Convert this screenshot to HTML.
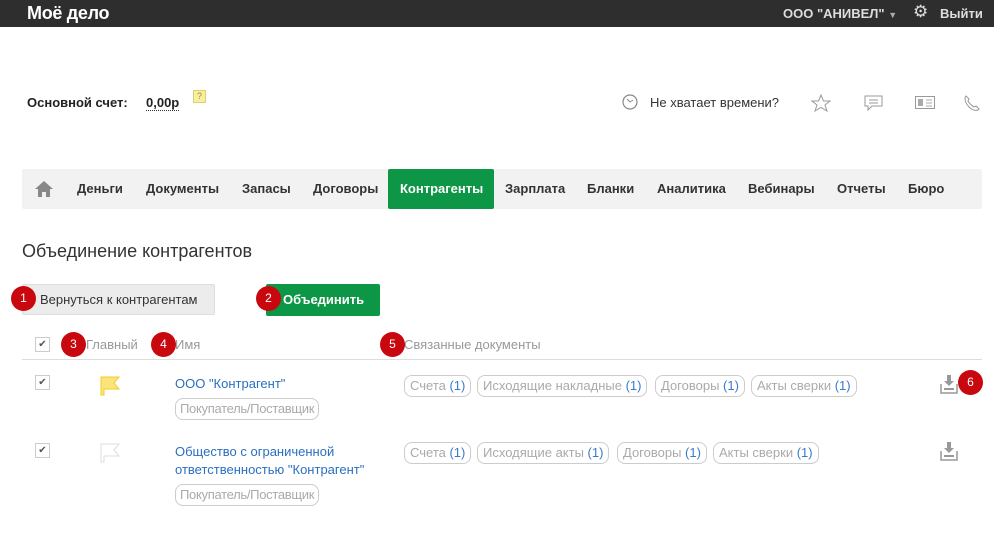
<!DOCTYPE html>
<html><head><meta charset="utf-8"><style>
*{margin:0;padding:0;box-sizing:border-box}
body{width:994px;height:539px;background:#fff;font-family:"Liberation Sans",Arial,sans-serif;position:relative;overflow:hidden;color:#333}
.a{position:absolute;white-space:nowrap}
.top{position:absolute;left:0;top:0;width:994px;height:27px;background:#2e2e2e}
.nav{position:absolute;left:22px;top:169px;width:960px;height:40px;background:#f2f2f2;border-radius:2px}
.nav span{position:absolute;top:12px;font-size:13px;font-weight:bold;color:#333}
.badge{position:absolute;width:25px;height:25px;border-radius:13px;background:#c8080e;color:#fff;font-size:12px;text-align:center;line-height:25px}
.cb{position:absolute;width:15px;height:15px;border:1px solid #ccc;background:#fff;font-size:10px;line-height:13px;text-align:center;color:#555}
.tag{position:absolute;height:22px;border:1px solid #ccc;border-radius:8px;font-size:13px;color:#aaa;line-height:20px;padding:0 5px}
.tag b{font-weight:normal;color:#3a7bc8}
.lnk{color:#2a6fc1;font-size:13px}
</style></head><body>
<div class="top"></div>
<div class="a" style="left:27px;top:3px;font-size:18px;font-weight:bold;color:#fff;letter-spacing:-0.3px">Моё дело</div>
<div class="a" style="left:783px;top:6px;font-size:13px;font-weight:bold;color:#ddd">ООО "АНИВЕЛ" <span style="font-size:9px;color:#aaa">▼</span></div>
<div class="a" style="left:913px;top:2px;font-size:17px;color:#ddd">⚙</div>
<div class="a" style="left:940px;top:6px;font-size:13px;font-weight:bold;color:#ddd">Выйти</div>

<div class="a" style="left:27px;top:95px;font-size:13px;font-weight:bold;color:#222">Основной счет:</div>
<div class="a" style="left:146px;top:95px;font-size:13px;font-weight:bold;color:#222;border-bottom:1px dotted #333">0,00р</div>
<div class="a" style="left:193px;top:90px;width:13px;height:13px;background:#f8eea0;border:1px solid #dccf70;font-size:9px;color:#a08a30;text-align:center;line-height:11px">?</div>

<svg class="a" style="left:622px;top:94px" width="16" height="16"><circle cx="8" cy="8" r="7" fill="none" stroke="#888" stroke-width="1.2"/><path d="M8 8L5 5M8 8L11 6" stroke="#888"/></svg>
<div class="a" style="left:650px;top:95px;font-size:13px;color:#333">Не хватает времени?</div>
<svg class="a" style="left:811px;top:94px" width="20" height="18"><path d="M10 1L12.5 7H19L14 11L16 17L10 13.5L4 17L6 11L1 7H7.5Z" fill="none" stroke="#999"/></svg>
<svg class="a" style="left:864px;top:95px" width="19" height="16"><path d="M1 1H18V11H8L4 15V11H1Z M5 5H14M5 8H14" fill="none" stroke="#999"/></svg>
<svg class="a" style="left:915px;top:96px" width="20" height="13"><rect x="0.5" y="0.5" width="19" height="12" fill="none" stroke="#999"/><rect x="3" y="3" width="5" height="7" fill="#aaa"/><path d="M11 4H17M11 7H17M11 10H17" stroke="#aaa"/></svg>
<svg class="a" style="left:963px;top:94px" width="18" height="18"><path d="M3 2C1 4 2 9 7 14C11 17 15 17 16 15L13 12L11 13C9 12 6 9 5 7L6 5Z" fill="none" stroke="#999"/></svg>

<div class="nav">
<svg class="a" style="left:12px;top:11px" width="20" height="18"><path d="M10 1L1 9H4V17H8V12H12V17H16V9H19Z" fill="#888"/></svg>
<span style="left:55px">Деньги</span>
<span style="left:124px">Документы</span>
<span style="left:220px">Запасы</span>
<span style="left:291px">Договоры</span>
<div class="a" style="left:366px;top:0;width:106px;height:40px;background:#0d9645;border-radius:2px"></div>
<span style="left:378px;color:#fff">Контрагенты</span>
<span style="left:483px">Зарплата</span>
<span style="left:565px">Бланки</span>
<span style="left:635px">Аналитика</span>
<span style="left:726px">Вебинары</span>
<span style="left:815px">Отчеты</span>
<span style="left:886px">Бюро</span>
</div>

<div class="a" style="left:22px;top:241px;font-size:18px;color:#333">Объединение контрагентов</div>

<div class="a" style="left:22px;top:284px;width:193px;height:31px;background:#ececec;border:1px solid #ddd;border-radius:2px"></div>
<div class="a" style="left:40px;top:292px;font-size:13px;color:#333">Вернуться к контрагентам</div>
<div class="a" style="left:266px;top:284px;width:114px;height:32px;background:#0d9645;border-radius:2px"></div>
<div class="a" style="left:283px;top:292px;font-size:13px;font-weight:bold;color:#fff">Объединить</div>
<div class="badge" style="left:11px;top:286px">1</div>
<div class="badge" style="left:256px;top:286px">2</div>

<div class="cb" style="left:35px;top:337px">✔</div>
<div class="a" style="left:86px;top:337px;font-size:13px;color:#999">Главный</div>
<div class="a" style="left:175px;top:337px;font-size:13px;color:#999">Имя</div>
<div class="a" style="left:404px;top:337px;font-size:13px;color:#999">Связанные документы</div>
<div class="badge" style="left:61px;top:332px">3</div>
<div class="badge" style="left:151px;top:332px">4</div>
<div class="badge" style="left:380px;top:332px">5</div>
<div class="a" style="left:22px;top:359px;width:960px;height:1px;background:#ddd"></div>

<div class="cb" style="left:35px;top:375px">✔</div>
<svg class="a" style="left:100px;top:376px" width="22" height="20"><path d="M1 1H19L14 7L19 13H4V19H1Z" fill="#fde47a" stroke="#f3cb2c"/></svg>
<div class="a lnk" style="left:175px;top:376px">ООО "Контрагент"</div>
<div class="tag" style="left:175px;top:398px;padding:0 4px;letter-spacing:-0.3px">Покупатель/Поставщик</div>
<div class="tag" style="left:404px;top:375px">Счета <b>(1)</b></div>
<div class="tag" style="left:477px;top:375px">Исходящие накладные <b>(1)</b></div>
<div class="tag" style="left:655px;top:375px">Договоры <b>(1)</b></div>
<div class="tag" style="left:751px;top:375px">Акты сверки <b>(1)</b></div>
<svg class="a" style="left:940px;top:374px" width="18" height="20"><path d="M7 1H11V7H14L9 12L4 7H7Z" fill="#999"/><path d="M1 10V19H17V10" fill="none" stroke="#999" stroke-width="1.5"/><path d="M4 15H14" stroke="#999" stroke-width="2"/></svg>
<div class="badge" style="left:958px;top:370px">6</div>

<div class="cb" style="left:35px;top:443px">✔</div>
<svg class="a" style="left:100px;top:443px" width="22" height="20"><path d="M1 1H19L14 7L19 13H4V19H1Z" fill="#fff" stroke="#ddd"/></svg>
<div class="a lnk" style="left:175px;top:443px;line-height:18px">Общество с ограниченной<br>ответственностью "Контрагент"</div>
<div class="tag" style="left:175px;top:484px;padding:0 4px;letter-spacing:-0.3px">Покупатель/Поставщик</div>
<div class="tag" style="left:404px;top:442px">Счета <b>(1)</b></div>
<div class="tag" style="left:477px;top:442px">Исходящие акты <b>(1)</b></div>
<div class="tag" style="left:617px;top:442px">Договоры <b>(1)</b></div>
<div class="tag" style="left:713px;top:442px">Акты сверки <b>(1)</b></div>
<svg class="a" style="left:940px;top:441px" width="18" height="20"><path d="M7 1H11V7H14L9 12L4 7H7Z" fill="#999"/><path d="M1 10V19H17V10" fill="none" stroke="#999" stroke-width="1.5"/><path d="M4 15H14" stroke="#999" stroke-width="2"/></svg>
</body></html>
